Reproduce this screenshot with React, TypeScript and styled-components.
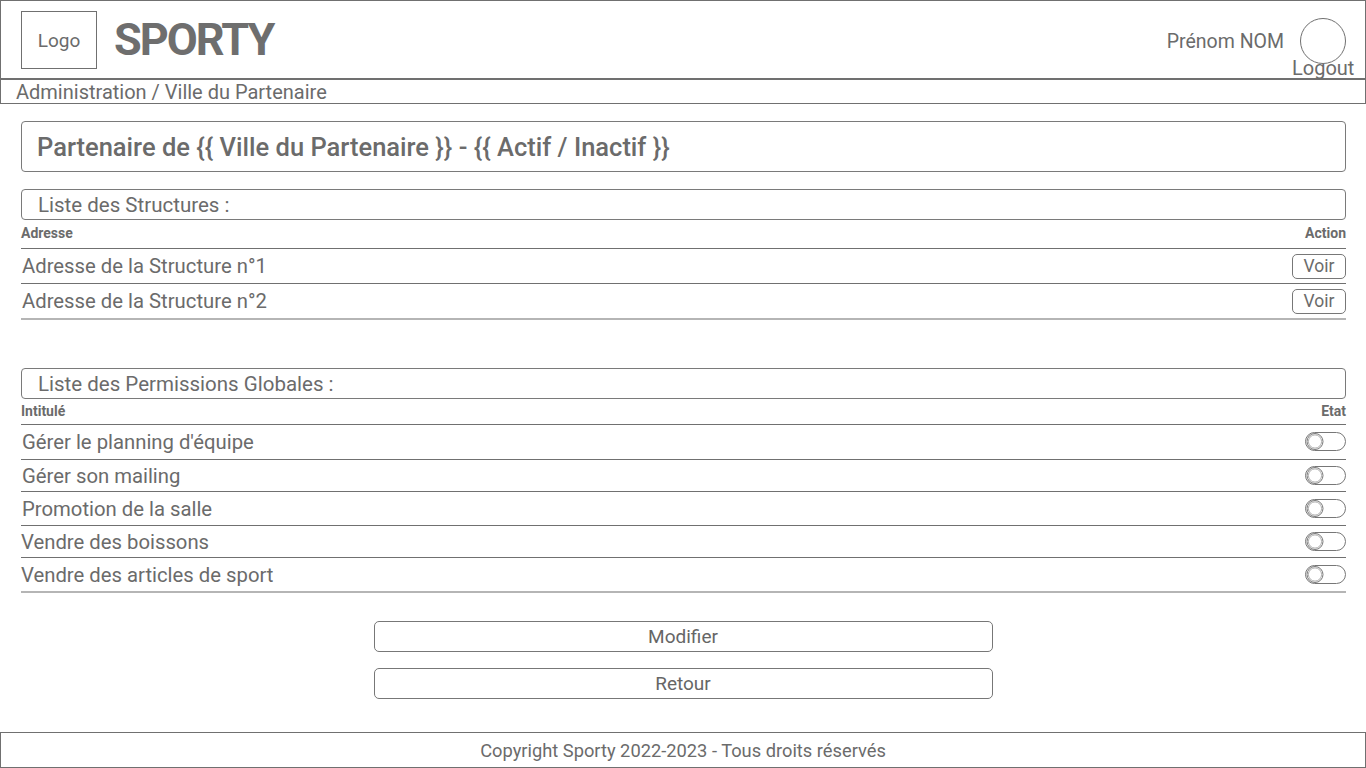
import React from "react";
import styled, { createGlobalStyle } from "styled-components";

const Global = createGlobalStyle`
  html, body { margin: 0; padding: 0; background: #fff; }
  body { font-family: Roboto, "DejaVu Sans", sans-serif; color: #6b6b6b; }
  * { box-sizing: border-box; }
`;

const Page = styled.div`
  width: 1366px;
  height: 768px;
  display: flex;
  flex-direction: column;
  overflow: hidden;
`;

const Header = styled.header`
  height: 80px;
  flex: none;
  border: 1px solid #707070;
  border-bottom-width: 2px;
  display: flex;
  align-items: center;
  padding: 0 12px 0 20px;
`;

const LogoBox = styled.div`
  width: 76px;
  height: 58px;
  border: 1px solid #707070;
  display: flex;
  align-items: center;
  justify-content: center;
  font-size: 19px;
  margin-top: 1px;
`;

const Brand = styled.div`
  margin-left: 17px;
  font-size: 45px;
  font-weight: 700;
  color: #6e6e6e;
  letter-spacing: -2px;
`;

const Spacer = styled.div`
  flex: 1;
`;

const UserName = styled.div`
  font-size: 19.5px;
  margin-right: 8px;
  margin-top: 3px;
`;

const UserBlock = styled.div`
  position: relative;
  width: 61px;
  height: 77px;
  display: flex;
  justify-content: center;
`;

const Avatar = styled.div`
  margin-top: 17px;
  width: 46px;
  height: 46px;
  border: 1px solid #707070;
  border-radius: 50%;
`;

const Logout = styled.div`
  position: absolute;
  left: 0;
  right: 0;
  top: 55px;
  text-align: center;
  font-size: 20px;
`;

const Crumb = styled.div`
  height: 24px;
  flex: none;
  border: 1px solid #707070;
  border-top: none;
  padding-left: 15px;
  font-size: 20px;
  display: flex;
  align-items: center;
`;

const Main = styled.main`
  flex: 1;
  padding: 17px 20px 0 21px;
  display: flex;
  flex-direction: column;
`;

const TitleBox = styled.div`
  height: 51px;
  flex: none;
  border: 1px solid #7a7a7a;
  border-radius: 4px;
  display: flex;
  align-items: center;
  padding-left: 15px;
  font-size: 25.5px;
  font-weight: 500;
  margin-bottom: 17px;
`;

const SectionBox = styled.div`
  height: 31px;
  flex: none;
  border: 1px solid #7a7a7a;
  border-radius: 4px;
  display: flex;
  align-items: center;
  padding-left: 16px;
  font-size: 20.5px;
`;

const HeadRow = styled.div<{ $h: number }>`
  height: ${(p) => p.$h}px;
  flex: none;
  border-bottom: 1px solid #707070;
  display: flex;
  align-items: center;
  justify-content: space-between;
  font-size: 14px;
  font-weight: 700;
  padding-bottom: 2px;
`;

const Row = styled.div<{ $h: number; $last?: boolean; $indent?: number }>`
  height: ${(p) => p.$h}px;
  flex: none;
  border-bottom: ${(p) => (p.$last ? "2px solid #b5b5b5" : "1px solid #707070")};
  display: flex;
  align-items: center;
  justify-content: space-between;
  font-size: 20.3px;
  padding-left: ${(p) => p.$indent ?? 1}px;
`;

const VoirButton = styled.button`
  width: 54px;
  height: 25px;
  border: 1px solid #777;
  border-radius: 5px;
  background: #fff;
  color: #6b6b6b;
  font-family: inherit;
  font-size: 17.5px;
  padding: 0;
  display: flex;
  align-items: center;
  justify-content: center;
`;

const Gap = styled.div<{ $h: number }>`
  height: ${(p) => p.$h}px;
  flex: none;
`;

const Actions = styled.div`
  display: flex;
  flex-direction: column;
  align-items: center;
  gap: 16px;
  padding-right: 1px;
`;

const WideButton = styled.button`
  width: 619px;
  height: 31px;
  border: 1px solid #777;
  border-radius: 5px;
  background: #fff;
  color: #666;
  font-family: inherit;
  font-size: 19px;
  font-weight: 400;
  display: flex;
  align-items: center;
  justify-content: center;
`;

const Footer = styled.footer`
  height: 36px;
  flex: none;
  border: 1px solid #707070;
  display: flex;
  align-items: center;
  justify-content: center;
  font-size: 18.3px;
`;

const Toggle = () => (
  <svg width="42" height="20" viewBox="0 0 42 20" style={{ marginRight: -1 }}>
    <rect x="0.5" y="0.5" width="40" height="18" rx="9" fill="#fff" stroke="#777" />
    <circle cx="10" cy="9.5" r="8" fill="#fff" stroke="#777" strokeWidth="1" />
    <circle cx="10" cy="9.5" r="6.6" fill="none" stroke="#999" strokeWidth="0.8" />
  </svg>
);

const structures = ["Adresse de la Structure n°1", "Adresse de la Structure n°2"];

const permissions: { label: string; h: number; indent: number }[] = [
  { label: "Gérer le planning d'équipe", h: 35, indent: 1 },
  { label: "Gérer son mailing", h: 32, indent: 1 },
  { label: "Promotion de la salle", h: 34, indent: 1 },
  { label: "Vendre des boissons", h: 32, indent: 0 },
  { label: "Vendre des articles de sport", h: 35, indent: 0 },
];

export default function App() {
  return (
    <Page>
      <Global />
      <Header>
        <LogoBox>Logo</LogoBox>
        <Brand>SPORTY</Brand>
        <Spacer />
        <UserName>Prénom NOM</UserName>
        <UserBlock>
          <Avatar />
          <Logout>Logout</Logout>
        </UserBlock>
      </Header>
      <Crumb>Administration / Ville du Partenaire</Crumb>
      <Main>
        <TitleBox>Partenaire de {"{{"} Ville du Partenaire {"}}"} - {"{{"} Actif / Inactif {"}}"}</TitleBox>
        <SectionBox>Liste des Structures :</SectionBox>
        <HeadRow $h={29}>
          <span>Adresse</span>
          <span>Action</span>
        </HeadRow>
        {structures.map((s, i) => (
          <Row key={s} $h={i === structures.length - 1 ? 36 : 35} $last={i === structures.length - 1}>
            <span>{s}</span>
            <VoirButton>Voir</VoirButton>
          </Row>
        ))}
        <Gap $h={48} />
        <SectionBox>Liste des Permissions Globales :</SectionBox>
        <HeadRow $h={26}>
          <span>Intitulé</span>
          <span>Etat</span>
        </HeadRow>
        {permissions.map((p, i) => (
          <Row key={p.label} $h={i === permissions.length - 1 ? 35 : p.h} $last={i === permissions.length - 1} $indent={p.indent}>
            <span>{p.label}</span>
            <Toggle />
          </Row>
        ))}
        <Gap $h={28} />
        <Actions>
          <WideButton>Modifier</WideButton>
          <WideButton>Retour</WideButton>
        </Actions>
      </Main>
      <Footer>Copyright Sporty 2022-2023 - Tous droits réservés</Footer>
    </Page>
  );
}
